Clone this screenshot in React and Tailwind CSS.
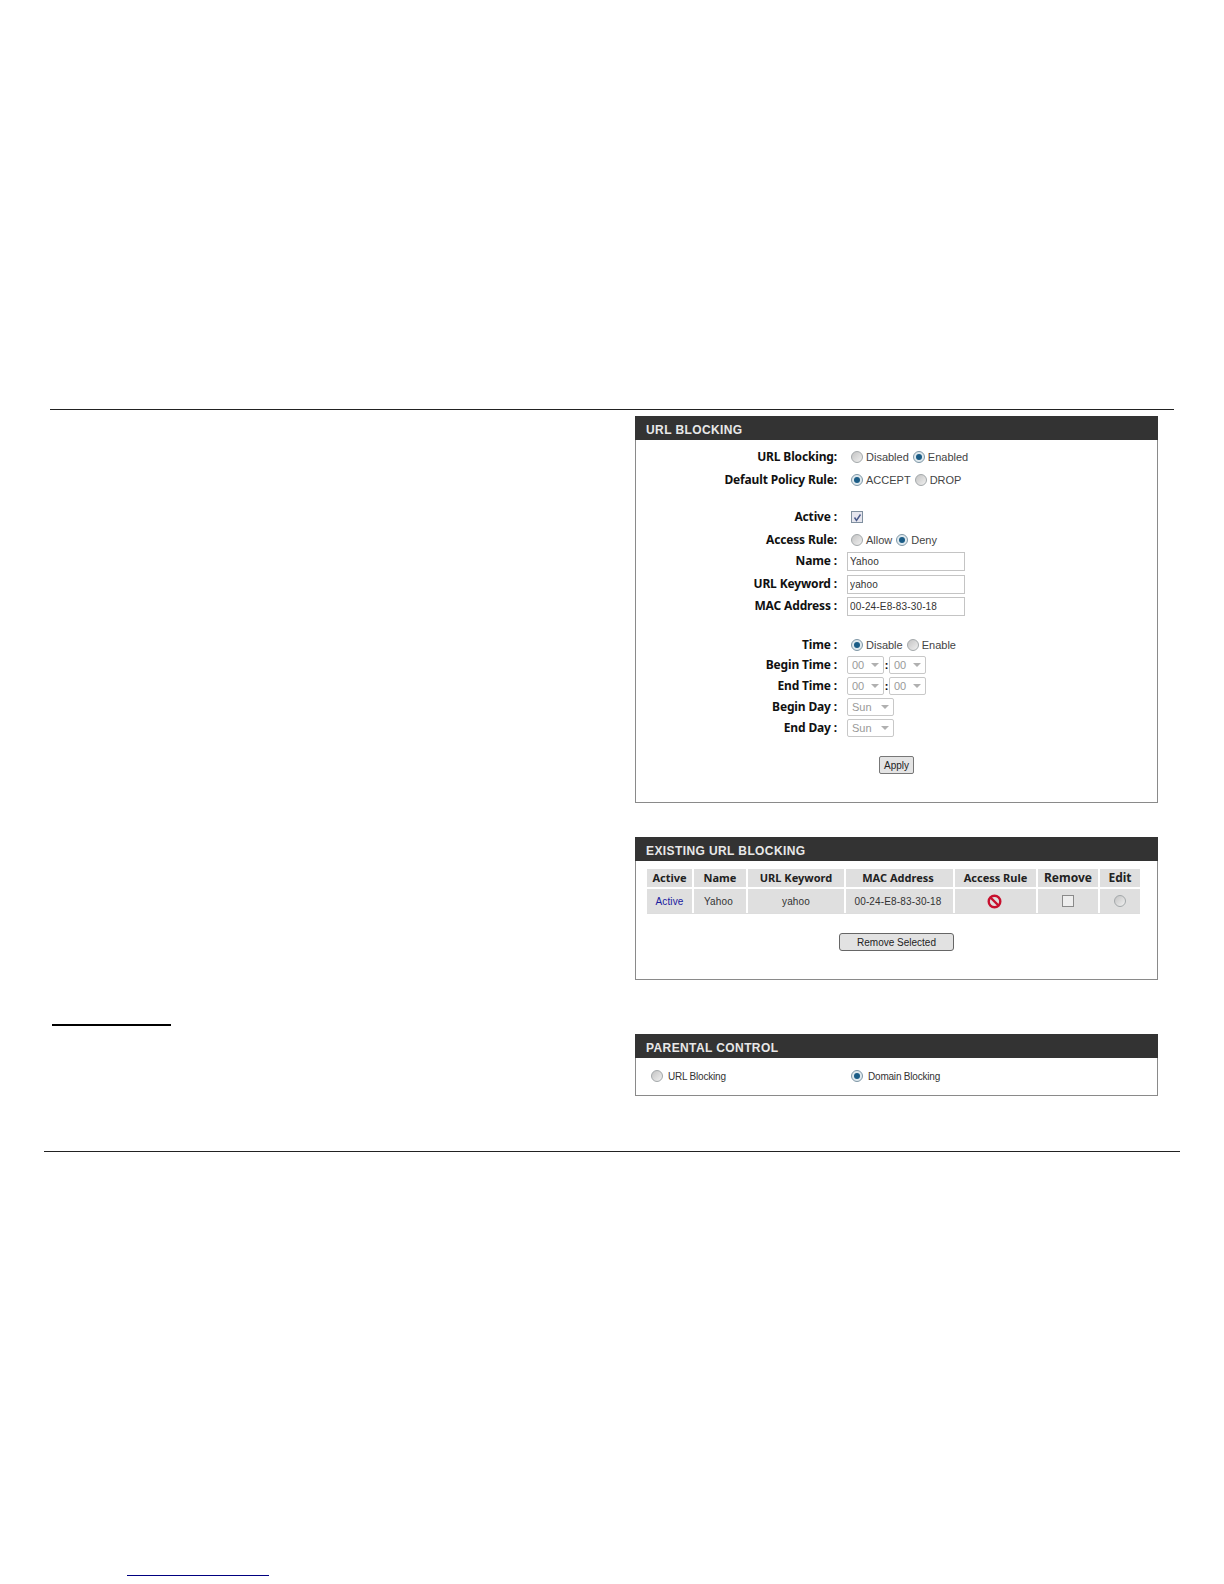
import React from "react";

const bold = "font-['Noto_Sans','Liberation_Sans',sans-serif]";
const plain = "font-['Liberation_Sans',sans-serif]";

const Radio = ({ on }) => (
  <span
    className={`w-[12px] h-[12px] shrink-0 rounded-full border flex items-center justify-center ${
      on ? "border-[#7f97a6] bg-[#dfe9ee]" : "border-[#a3a8aa] bg-linear-to-br from-[#c4c4c4] to-[#f0f0f0]"
    }`}
  >
    {on && <span className="w-[6px] h-[6px] rounded-full bg-[#1a5c86]" />}
  </span>
);

const Choice = ({ on, label }) => (
  <span className="flex items-center gap-[3px]">
    <Radio on={on} />
    <span className={`text-[11px] text-[#444] ${plain}`}>{label}</span>
  </span>
);

const Row = ({ label, mt, children }) => (
  <div className={`flex items-center h-[20px] ${mt}`}>
    <div className={`w-[201px] shrink-0 text-right text-[12px] font-bold tracking-[-0.15px] text-[#111] ${bold}`}>{label}</div>
    <div className="ml-[10px] flex items-center">{children}</div>
  </div>
);

const Field = ({ value }) => (
  <input
    readOnly
    value={value}
    className={`w-[118px] h-[19px] border border-[#c4c4c4] px-[2px] text-[10px] tracking-[0.15px] text-[#333] bg-white outline-none ${plain}`}
  />
);

const Select = ({ value, w }) => (
  <span className={`${w} h-[18px] border border-[#c8c8c8] bg-white rounded-[2px] flex items-center justify-between px-[4px] text-[11px] text-[#999] ${plain}`}>
    {value}
    <svg width="8" height="4" viewBox="0 0 8 4"><path d="M0 0h8L4 4z" fill="#b0b0b0" /></svg>
  </span>
);

const Panel = ({ title, className, children }) => (
  <section className={`border border-t-0 border-[#8a8a8a] ${className}`}>
    <h2 className={`h-[24px] -mx-px bg-[#333] pl-[11px] pt-[3px] flex items-center text-[12px] font-bold tracking-[0.4px] text-[#e8e8e8] ${plain}`}>
      {title}
    </h2>
    {children}
  </section>
);

const Choices = ({ children }) => <span className="flex gap-[4px] ml-[4px]">{children}</span>;

const Time = () => (
  <span className="flex items-center">
    <Select value="00" w="w-[37px]" />
    <b className="text-[11px] w-[5px] text-center">:</b>
    <Select value="00" w="w-[37px]" />
  </span>
);

const head = [
  { text: "Active", cls: "text-[11px]" },
  { text: "Name", cls: "text-[11px]" },
  { text: "URL Keyword", cls: "text-[11px]" },
  { text: "MAC Address", cls: "text-[11px] pr-[3px]" },
  { text: "Access Rule", cls: "text-[11px]" },
  { text: "Remove", cls: "text-[12px]" },
  { text: "Edit", cls: "text-[12px]" },
];

const cell = "h-[24px] bg-[#dfdfdf] flex items-center justify-center";
const cellText = `text-[10px] tracking-[0.15px] text-[#333] ${plain}`;

const App = () => {
  return (
    <div className="h-[1584px] bg-white overflow-hidden pt-[409px]">
      <div className="ml-[50px] w-[1124px] h-px bg-[#222]" />

      <div className="flex mt-[6px]">
        <div className="w-[635px] shrink-0 pl-[52px] pt-[608px]">
          <div className="w-[119px] h-[2px] bg-black" />
        </div>

        <div className="w-[523px]">
          <Panel title="URL BLOCKING" className="h-[387px]">
            <div className="pt-[7px]">
              <Row label="URL Blocking:">
                <Choices><Choice label="Disabled" /><Choice on label="Enabled" /></Choices>
              </Row>
              <Row label="Default Policy Rule:" mt="mt-[3px]">
                <Choices><Choice on label="ACCEPT" /><Choice label="DROP" /></Choices>
              </Row>
              <Row label="Active :" mt="mt-[17px]">
                <span className="ml-[4px] w-[12px] h-[12px] border border-[#7f8f9f] bg-[#e6e6ee] flex items-center justify-center">
                  <svg width="9" height="9" viewBox="0 0 9 9"><path d="M1.5 4.5l2 3 4-6" fill="none" stroke="#4a5a8a" strokeWidth="1.5" /></svg>
                </span>
              </Row>
              <Row label="Access Rule:" mt="mt-[3px]">
                <Choices><Choice label="Allow" /><Choice on label="Deny" /></Choices>
              </Row>
              <Row label="Name :" mt="mt-[1px]"><Field value="Yahoo" /></Row>
              <Row label="URL Keyword :" mt="mt-[3px]"><Field value="yahoo" /></Row>
              <Row label="MAC Address :" mt="mt-[2px]"><Field value="00-24-E8-83-30-18" /></Row>
              <Row label="Time :" mt="mt-[19px]">
                <Choices><Choice on label="Disable" /><Choice label="Enable" /></Choices>
              </Row>
              <Row label="Begin Time :"><Time /></Row>
              <Row label="End Time :" mt="mt-[1px]"><Time /></Row>
              <Row label="Begin Day :" mt="mt-[1px]"><Select value="Sun" w="w-[47px]" /></Row>
              <Row label="End Day :" mt="mt-[1px]"><Select value="Sun" w="w-[47px]" /></Row>
              <div className="flex justify-center mt-[18px]">
                <button className={`w-[35px] h-[18px] border border-[#777] rounded-[2px] bg-[#e4e4e4] text-[10px] text-[#222] ${plain}`}>Apply</button>
              </div>
            </div>
          </Panel>

          <Panel title="EXISTING URL BLOCKING" className="h-[143px] mt-[34px]">
            <div className="grid grid-cols-[45px_52px_96px_107px_81px_60px_40px] gap-[2px] ml-[11px] mt-[8px] border-b border-[#ddd] w-[493px]">
              {head.map((h) => (
                <div key={h.text} className={`h-[18px] bg-[#dfdfdf] flex items-center justify-center font-bold text-[#222] ${bold} ${h.cls}`}>{h.text}</div>
              ))}
              <div className={`${cell} text-[10px] tracking-[0.15px] text-[#1a1aa0] ${plain}`}>Active</div>
              <div className={`${cell} ${cellText} pr-[3px]`}>Yahoo</div>
              <div className={`${cell} ${cellText}`}>yahoo</div>
              <div className={`${cell} ${cellText} pr-[3px]`}>00-24-E8-83-30-18</div>
              <div className={`${cell} pr-[2px]`}>
                <svg width="15" height="15" viewBox="0 0 15 15">
                  <circle cx="7.5" cy="7.5" r="5.8" fill="none" stroke="#c8102e" strokeWidth="2.4" />
                  <path d="M3.5 3.5l8 8" stroke="#c8102e" strokeWidth="2.4" />
                </svg>
              </div>
              <div className={cell}>
                <span className="w-[12px] h-[12px] border border-[#8a8a8a] bg-[#eee]" />
              </div>
              <div className={cell}><Radio /></div>
            </div>
            <div className="flex justify-center mt-[19px]">
              <button className={`w-[115px] h-[18px] border border-[#666] rounded-[3px] bg-[#e2e2e2] text-[10px] text-[#222] ${plain}`}>Remove Selected</button>
            </div>
          </Panel>

          <Panel title="PARENTAL CONTROL" className="h-[62px] mt-[54px]">
            <div className={`flex items-center h-[36px] pl-[15px] text-[10px] tracking-[-0.2px] text-[#333] ${plain}`}>
              <span className="w-[200px] flex items-center gap-[5px]"><Radio />URL Blocking</span>
              <span className="flex items-center gap-[5px]"><Radio on />Domain Blocking</span>
            </div>
          </Panel>
        </div>
      </div>

      <div className="ml-[44px] w-[1136px] h-px bg-[#222] mt-[55px]" />
      <div className="ml-[127px] w-[142px] h-px bg-[#000080] mt-[423px]" />
    </div>
  );
};

export default App;
